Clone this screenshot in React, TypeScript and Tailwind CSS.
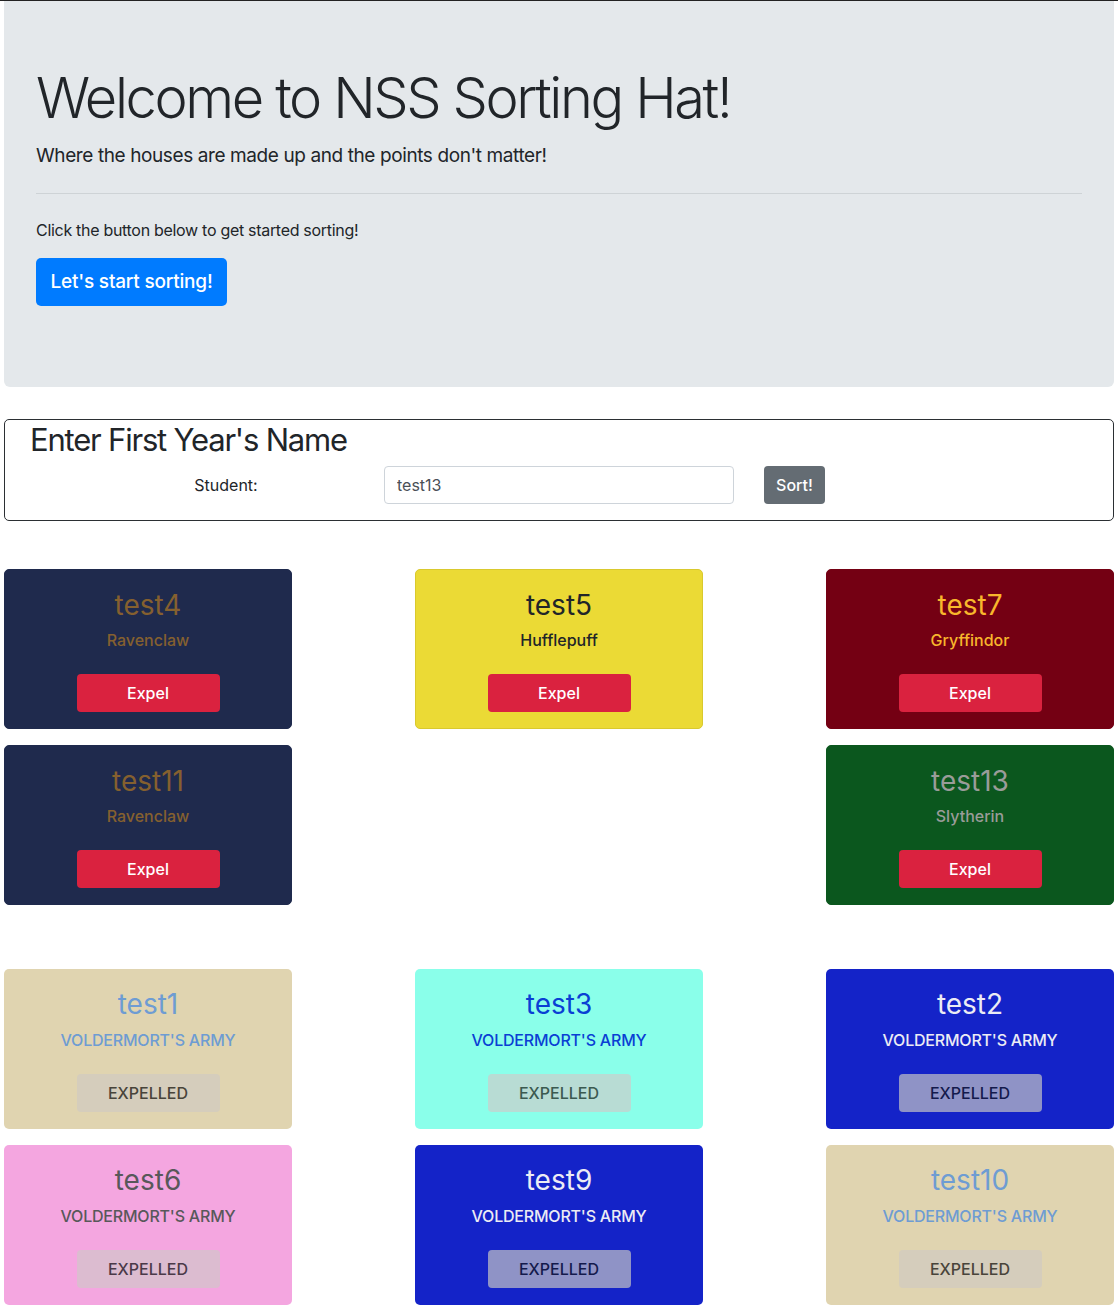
import React from 'react';

type Student = {
  name: string;
  house: string;
  card: string;
  text: string;
};

const students: Student[] = [
  { name: 'test4', house: 'Ravenclaw', card: 'bg-[#1f2a4d] border-[#1f2a4d]', text: 'text-[#85602f]' },
  { name: 'test5', house: 'Hufflepuff', card: 'bg-[#ebda35] border-[#d9c92e]', text: 'text-[#212529]' },
  { name: 'test7', house: 'Gryffindor', card: 'bg-[#740013] border-[#740013]', text: 'text-[#f8b72c]' },
  { name: 'test11', house: 'Ravenclaw', card: 'bg-[#1f2a4d] border-[#1f2a4d]', text: 'text-[#85602f]' },
  { name: '', house: '', card: '', text: '' },
  { name: 'test13', house: 'Slytherin', card: 'bg-[#0b571e] border-[#0b571e]', text: 'text-[#9a9c99]' },
];

type Expelled = {
  name: string;
  card: string;
  text: string;
  btn: string;
};

const expelled: Expelled[] = [
  { name: 'test1', card: 'bg-[#e0d4b0]', text: 'text-[#6e9cd3]', btn: 'bg-[#d5cdbc] text-[#48443a]' },
  { name: 'test3', card: 'bg-[#8affea]', text: 'text-[#0a3fd4]', btn: 'bg-[#b8dcd4] text-[#3b5a50]' },
  { name: 'test2', card: 'bg-[#1423c8]', text: 'text-[#ececf4]', btn: 'bg-[#8f93c6] text-[#141a4c]' },
  { name: 'test6', card: 'bg-[#f4a6e0]', text: 'text-[#58585a]', btn: 'bg-[#dcbcd0] text-[#4a3948]' },
  { name: 'test9', card: 'bg-[#1423c8]', text: 'text-[#ececf4]', btn: 'bg-[#8f93c6] text-[#141a4c]' },
  { name: 'test10', card: 'bg-[#e0d4b0]', text: 'text-[#6e9cd3]', btn: 'bg-[#d5cdbc] text-[#48443a]' },
];

const StudentCard = ({ s }: { s: Student }) => {
  if (!s.name) return <div className="w-[288px] h-[160px]"></div>;
  return (
    <div className={`w-[288px] h-[160px] rounded-[5px] border flex flex-col items-center pt-[18px] ${s.card}`}>
      <h3 className={`text-[28px] leading-[34px] ${s.text}`}>{s.name}</h3>
      <p className={`text-[16px] leading-[24px] mt-[6px] font-medium ${s.text}`}>{s.house}</p>
      <button className="mt-[22px] w-[143px] h-[38px] rounded-[4px] bg-[#da223f] text-white text-[16px] font-medium">Expel</button>
    </div>
  );
};

const ExpelledCard = ({ s }: { s: Expelled }) => (
  <div className={`w-[288px] h-[160px] rounded-[5px] flex flex-col items-center pt-[18px] ${s.card}`}>
    <h3 className={`text-[28px] leading-[34px] ${s.text}`}>{s.name}</h3>
    <p className={`text-[16px] leading-[24px] mt-[7px] font-medium tracking-[-0.2px] ${s.text}`}>VOLDERMORT'S ARMY</p>
    <button className={`mt-[22px] w-[143px] h-[38px] rounded-[4px] text-[16px] font-medium ${s.btn}`}>EXPELLED</button>
  </div>
);

export default function App() {
  return (
    <div className="min-h-[1307px] bg-white font-['Inter','Liberation_Sans',sans-serif] text-[#212529] border-t border-[#222]">
      <div className="px-[4px]">
        {/* Jumbotron */}
        <div className="bg-[#e4e8eb] rounded-b-[6px] px-[32px] pt-[64px] pb-[81px]">
          <h1 className="text-[56px] font-light leading-[67px] tracking-[-2.4px]">Welcome to NSS Sorting Hat!</h1>
          <p className="text-[19px] leading-[30px] mt-[9px] tracking-[-0.4px]">Where the houses are made up and the points don't matter!</p>
          <hr className="mt-[22px] mb-[24px] border-t border-[#ced3d6]" />
          <p className="text-[16px] leading-[24px] mt-[2px] tracking-[-0.3px]">Click the button below to get started sorting!</p>
          <button className="mt-[16px] h-[48px] w-[191px] rounded-[5px] bg-[#007bff] text-white text-[19px] font-medium tracking-[-0.2px]">Let's start sorting!</button>
        </div>

        {/* Form */}
        <div className="mt-[32px] border border-[#2b2f33] rounded-[5px] px-[25px] pt-[1px] pb-[16px]">
          <h2 className="text-[31px] leading-[38px] tracking-[-1.2px]">Enter First Year's Name</h2>
          <div className="flex items-center mt-[7px]">
            <label className="w-[354px] pl-[38px] text-center text-[16px]">Student:</label>
            <input
              readOnly
              value="test13"
              className="w-[350px] h-[38px] rounded-[4px] border border-[#ced4da] px-[12px] text-[16px] text-[#495057] bg-white"
            />
            <button className="ml-[30px] w-[61px] h-[38px] rounded-[4px] bg-[#646c73] text-white text-[16px] font-medium">Sort!</button>
          </div>
        </div>

        {/* Sorted students */}
        <div className="mt-[48px] grid grid-cols-[288px_288px_288px] justify-between gap-y-[16px]">
          {students.map((s, i) => (
            <StudentCard key={i} s={s} />
          ))}
        </div>

        {/* Expelled */}
        <div className="mt-[64px] grid grid-cols-[288px_288px_288px] justify-between gap-y-[16px]">
          {expelled.map((s) => (
            <ExpelledCard key={s.name} s={s} />
          ))}
        </div>
      </div>
    </div>
  );
}
